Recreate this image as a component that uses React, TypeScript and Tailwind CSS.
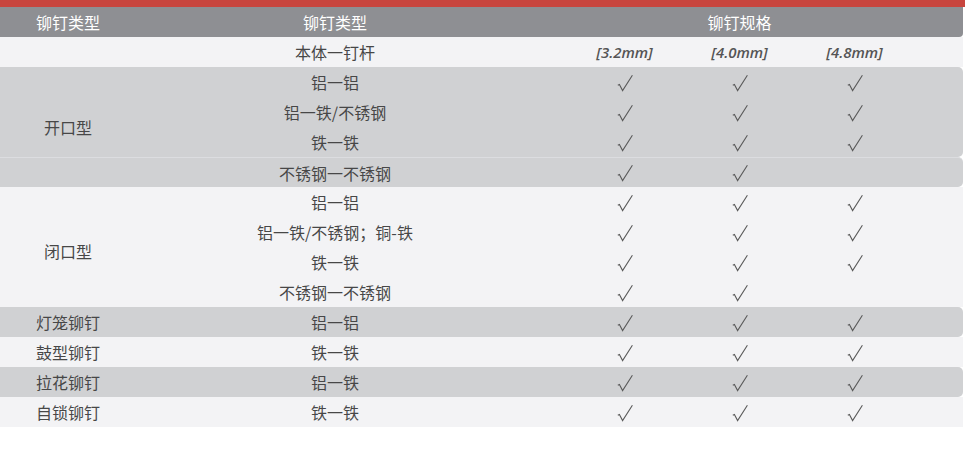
import React from "react";

const FONT = { fontFamily: '"Noto Sans CJK SC", "Noto Sans", sans-serif' };

type Row = { name: string; checks: number };

const Check = () => (
  <svg width="16" height="18" viewBox="0 0 16 18" className="mt-[1px]">
    <path d="M0.8 11.2 L2.4 10.4 L5.6 16.6 L15.4 1.2" fill="none" stroke="#5a5a5a" strokeWidth="1.1" strokeLinejoin="miter" />
  </svg>
);

function SpecCells({ checks }: { checks: number }) {
  return (
    <>
      {[0, 1, 2].map((i) => (
        <div key={i} className="w-[115px] flex items-center justify-center">
          {i < checks ? <Check /> : null}
        </div>
      ))}
    </>
  );
}

function InnerRow({ row, extra = "" }: { row: Row; extra?: string }) {
  return (
    <div className={`flex h-[30px] items-center ${extra}`}>
      <div className="w-[398px] text-center">{row.name}</div>
      <div className="w-[33px]" />
      <SpecCells checks={row.checks} />
    </div>
  );
}

function SingleRow({ label, row, gray }: { label: string; row: Row; gray: boolean }) {
  return (
    <div className={`flex h-[30px] items-center ${gray ? "bg-[#d0d1d3] rounded-r-[5px]" : "bg-[#f3f3f5]"}`}>
      <div className="w-[136px] text-center">{label}</div>
      <div className="w-[398px] text-center">{row.name}</div>
      <div className="w-[33px]" />
      <SpecCells checks={row.checks} />
    </div>
  );
}

export default function App() {
  const open: Row[] = [
    { name: "铝一铝", checks: 3 },
    { name: "铝一铁/不锈钢", checks: 3 },
    { name: "铁一铁", checks: 3 },
  ];
  const closed: Row[] = [
    { name: "铝一铝", checks: 3 },
    { name: "铝一铁/不锈钢；铜-铁", checks: 3 },
    { name: "铁一铁", checks: 3 },
    { name: "不锈钢一不锈钢", checks: 2 },
  ];
  return (
    <div className="w-[965px] h-[455px] bg-white text-[16px] text-[#474747]" style={FONT}>
      <div className="h-[7px] bg-[#c8453e]" />
      <div className="w-[963px]">
        <div className="flex h-[30px] items-center bg-[#8e8f93] text-white text-[16px] rounded-br-[4px]">
          <div className="w-[136px] text-center">铆钉类型</div>
          <div className="w-[398px] text-center">铆钉类型</div>
          <div className="w-[33px]" />
          <div className="w-[345px] text-center">铆钉规格</div>
        </div>
        <div className="flex h-[30px] items-center bg-[#f3f3f5]">
          <div className="w-[136px]" />
          <div className="w-[398px] text-center">本体一钉杆</div>
          <div className="w-[33px]" />
          {["[3.2mm]", "[4.0mm]", "[4.8mm]"].map((s) => (
            <div key={s} className="w-[115px] text-center italic font-semibold text-[15px] text-[#555]" style={{ fontFamily: '"Open Sans", sans-serif' }}>
              {s}
            </div>
          ))}
        </div>
        <div className="bg-[#d0d1d3] rounded-r-[5px]">
          <div className="flex">
            <div className="w-[136px] flex items-center justify-center pt-[30px]">开口型</div>
            <div className="flex-1 flex flex-col">
              {open.map((r, i) => (
                <InnerRow key={i} row={r} />
              ))}
            </div>
          </div>
        </div>
        <div className="flex bg-[#d0d1d3] rounded-r-[5px] border-t border-[#dcdde0] h-[30px] items-center">
          <div className="w-[136px]" />
          <div className="w-[398px] text-center">不锈钢一不锈钢</div>
          <div className="w-[33px]" />
          <SpecCells checks={2} />
        </div>
        <div className="flex bg-[#f3f3f5]">
          <div className="w-[136px] flex items-center justify-center pt-[8px]">闭口型</div>
          <div className="flex-1 flex flex-col">
            {closed.map((r, i) => (
              <InnerRow key={i} row={r} />
            ))}
          </div>
        </div>
        <SingleRow label="灯笼铆钉" row={{ name: "铝一铝", checks: 3 }} gray />
        <SingleRow label="鼓型铆钉" row={{ name: "铁一铁", checks: 3 }} gray={false} />
        <SingleRow label="拉花铆钉" row={{ name: "铝一铁", checks: 3 }} gray />
        <SingleRow label="自锁铆钉" row={{ name: "铁一铁", checks: 3 }} gray={false} />
      </div>
    </div>
  );
}
